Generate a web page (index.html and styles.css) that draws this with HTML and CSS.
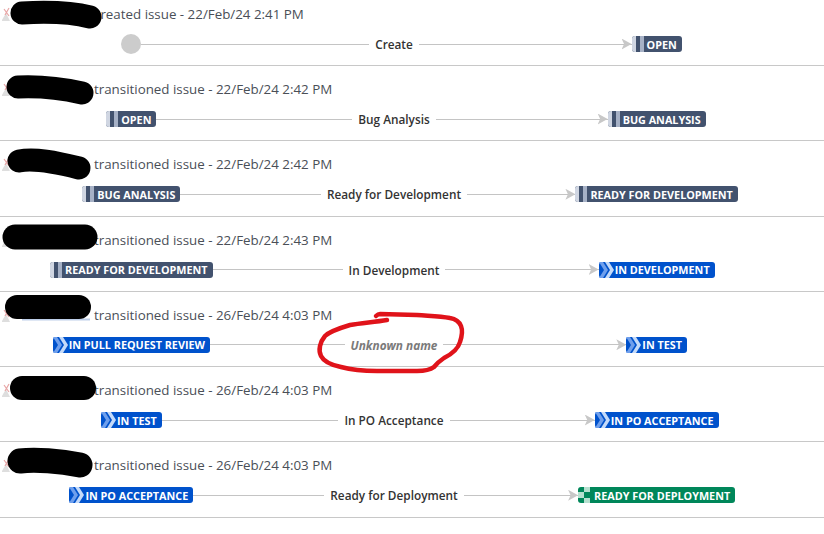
FILE: index.html
```html
<!DOCTYPE html>
<html lang="en">
<head>
<meta charset="utf-8">
<title>Issue history</title>
<link rel="stylesheet" href="styles.css">
</head>
<body>
<main class="history">
  <section class="entry">
    <p class="summary"><svg class="avatar" viewBox="0 0 10 16"><path d="M1 14L5 7l4 8H1z" fill="#dedede"/><path d="M3 3l5 7M8 2L4 9" stroke="#e8a5a5" stroke-width="1.2" fill="none"/></svg><span class="name"></span>created issue - 22/Feb/24 2:41 PM</p>
    <div class="flow">
      <div class="side from"><s></s><span class="start-dot"></span><i></i></div>
      <div class="mid"><i></i><b>Create</b><i></i></div>
      <div class="side to"><i></i><em></em><span class="status grey"><u class="bars"></u>OPEN</span><s></s></div>
    </div>
  </section>
  <section class="entry">
    <p class="summary"><svg class="avatar" viewBox="0 0 10 16"><path d="M1 14L5 7l4 8H1z" fill="#dedede"/><path d="M3 3l5 7M8 2L4 9" stroke="#e8a5a5" stroke-width="1.2" fill="none"/></svg><span class="name"></span>transitioned issue - 22/Feb/24 2:42 PM</p>
    <div class="flow">
      <div class="side from"><s></s><span class="status grey"><u class="bars"></u>OPEN</span><i></i></div>
      <div class="mid"><i></i><b>Bug Analysis</b><i></i></div>
      <div class="side to"><i></i><em></em><span class="status grey"><u class="bars"></u>BUG ANALYSIS</span><s></s></div>
    </div>
  </section>
  <section class="entry">
    <p class="summary"><svg class="avatar" viewBox="0 0 10 16"><path d="M1 14L5 7l4 8H1z" fill="#dedede"/><path d="M3 3l5 7M8 2L4 9" stroke="#e8a5a5" stroke-width="1.2" fill="none"/></svg><span class="name"></span>transitioned issue - 22/Feb/24 2:42 PM</p>
    <div class="flow">
      <div class="side from"><s></s><span class="status grey"><u class="bars"></u>BUG ANALYSIS</span><i></i></div>
      <div class="mid"><i></i><b>Ready for Development</b><i></i></div>
      <div class="side to"><i></i><em></em><span class="status grey"><u class="bars"></u>READY FOR DEVELOPMENT</span><s></s></div>
    </div>
  </section>
  <section class="entry">
    <p class="summary"><svg class="avatar" viewBox="0 0 10 16"><path d="M1 14L5 7l4 8H1z" fill="#dedede"/><path d="M3 3l5 7M8 2L4 9" stroke="#e8a5a5" stroke-width="1.2" fill="none"/></svg><span class="name"></span>transitioned issue - 22/Feb/24 2:43 PM</p>
    <div class="flow">
      <div class="side from"><s></s><span class="status grey"><u class="bars"></u>READY FOR DEVELOPMENT</span><i></i></div>
      <div class="mid"><i></i><b>In Development</b><i></i></div>
      <div class="side to"><i></i><em></em><span class="status blue"><svg class="chev" viewBox="0 0 15 16"><path d="M0 0h4l5 8-5 8H0l5-8z" fill="#6f9fec"/><path d="M6 0h4l5 8-5 8H6l5-8z" fill="#c4daf9"/></svg>IN DEVELOPMENT</span><s></s></div>
    </div>
  </section>
  <section class="entry">
    <p class="summary"><svg class="avatar" viewBox="0 0 10 16"><path d="M1 14L5 7l4 8H1z" fill="#dedede"/><path d="M3 3l5 7M8 2L4 9" stroke="#e8a5a5" stroke-width="1.2" fill="none"/></svg><span class="name"></span>transitioned issue - 26/Feb/24 4:03 PM</p>
    <div class="flow">
      <div class="side from"><s></s><span class="status blue"><svg class="chev" viewBox="0 0 15 16"><path d="M0 0h4l5 8-5 8H0l5-8z" fill="#6f9fec"/><path d="M6 0h4l5 8-5 8H6l5-8z" fill="#c4daf9"/></svg>IN PULL REQUEST REVIEW</span><i></i></div>
      <div class="mid"><i></i><b class="unknown">Unknown name</b><i></i></div>
      <div class="side to"><i></i><em></em><span class="status blue"><svg class="chev" viewBox="0 0 15 16"><path d="M0 0h4l5 8-5 8H0l5-8z" fill="#6f9fec"/><path d="M6 0h4l5 8-5 8H6l5-8z" fill="#c4daf9"/></svg>IN TEST</span><s></s></div>
    </div>
  </section>
  <section class="entry">
    <p class="summary"><svg class="avatar" viewBox="0 0 10 16"><path d="M1 14L5 7l4 8H1z" fill="#dedede"/><path d="M3 3l5 7M8 2L4 9" stroke="#e8a5a5" stroke-width="1.2" fill="none"/></svg><span class="name"></span>transitioned issue - 26/Feb/24 4:03 PM</p>
    <div class="flow">
      <div class="side from"><s></s><span class="status blue"><svg class="chev" viewBox="0 0 15 16"><path d="M0 0h4l5 8-5 8H0l5-8z" fill="#6f9fec"/><path d="M6 0h4l5 8-5 8H6l5-8z" fill="#c4daf9"/></svg>IN TEST</span><i></i></div>
      <div class="mid"><i></i><b>In PO Acceptance</b><i></i></div>
      <div class="side to"><i></i><em></em><span class="status blue"><svg class="chev" viewBox="0 0 15 16"><path d="M0 0h4l5 8-5 8H0l5-8z" fill="#6f9fec"/><path d="M6 0h4l5 8-5 8H6l5-8z" fill="#c4daf9"/></svg>IN PO ACCEPTANCE</span><s></s></div>
    </div>
  </section>
  <section class="entry">
    <p class="summary"><svg class="avatar" viewBox="0 0 10 16"><path d="M1 14L5 7l4 8H1z" fill="#dedede"/><path d="M3 3l5 7M8 2L4 9" stroke="#e8a5a5" stroke-width="1.2" fill="none"/></svg><span class="name"></span>transitioned issue - 26/Feb/24 4:03 PM</p>
    <div class="flow">
      <div class="side from"><s></s><span class="status blue"><svg class="chev" viewBox="0 0 15 16"><path d="M0 0h4l5 8-5 8H0l5-8z" fill="#6f9fec"/><path d="M6 0h4l5 8-5 8H6l5-8z" fill="#c4daf9"/></svg>IN PO ACCEPTANCE</span><i></i></div>
      <div class="mid"><i></i><b>Ready for Deployment</b><i></i></div>
      <div class="side to"><i></i><em></em><span class="status green"><svg class="check" viewBox="0 0 12 16"><path d="M6 0h6v5H6zM0 5h6v6H0zM6 11h6v5H6z" fill="#b5e0cf"/></svg>READY FOR DEPLOYMENT</span><s></s></div>
    </div>
  </section>
</main>
<svg class="markup" viewBox="0 0 824 534" aria-hidden="true">
  <path d="M22 319.5H90" stroke="#6f94cf" stroke-width="2" opacity=".45" fill="none"/>
  <g fill="none" stroke="#000" stroke-linecap="round" stroke-linejoin="round">
    <path d="M22 13C40 12 70 12 90 17" stroke-width="23"/>
    <path d="M18 87C40 86 60 88 82 93" stroke-width="23"/>
    <path d="M19 161C35 158 55 162 79 168" stroke-width="23"/>
    <path d="M15 237H85" stroke-width="25"/>
    <path d="M17 307H79" stroke-width="24"/>
    <path d="M22 388H84" stroke-width="24"/>
    <path d="M20 461C35 459 60 461 80 465" stroke-width="25"/>
  </g>
  <path d="M387 320C375 322 362 323 350 325C340 328 330 331 325 336C320 342 318 350 321 356C324 362 331 365 341 367C352 370 365 371 377 371L417 371C424 371 430 370 434 367C438 362 441 360 444 358C452 354 458 349 460 342C462 336 463 331 461 326C459 321 456 319 450 318C440 316 430 316 417 315L380 314C378 314 377 315 376 316" fill="none" stroke="#e0131a" stroke-width="4.5" stroke-linecap="round" stroke-linejoin="round"/>
</svg>
</body>
</html>
```
FILE: styles.css
```css
* { box-sizing: border-box; }
html, body { margin: 0; padding: 0; background: #fff; }
body {
  position: relative;
  width: 824px;
  height: 534px;
  overflow: hidden;
  font-family: "Open Sans", "Liberation Sans", sans-serif;
  color: #333;
}
.history { display: flex; flex-direction: column; }
.entry {
  height: 75.25px;
  border-bottom: 1px solid #c8c8c8;
  padding-top: 13px;
}
.entry:first-child { height: 66px; padding-top: 4px; }
.summary {
  display: flex;
  align-items: center;
  height: 20px;
  margin: 0;
  font-size: 13.35px;
  line-height: 20px;
  color: #4a4f57;
}
.avatar {
  flex: none;
  width: 10px;
  height: 16px;
  margin: 0 0 0 1px;
}
.name { flex: none; width: 83px; }
.flow {
  display: grid;
  grid-template-columns: repeat(3, 262.67px);
  height: 20px;
  margin-top: 10px;
  align-items: center;
}
.side, .mid { display: flex; align-items: center; min-width: 0; }
.side i, .mid i, .side s { flex: 1 1 0; }
.side i, .mid i { height: 1px; background: #c4c4c4; }
.side s { display: block; }
.side em {
  flex: none;
  width: 10px;
  height: 11px;
  margin-left: -10px;
  background: #c8c8c8;
  clip-path: polygon(0 0, 100% 50%, 0 100%, 25% 50%);
}
.mid b {
  flex: none;
  padding: 0 6px;
  font-size: 11.8px;
  font-weight: 600;
  color: #333;
}
.mid b.unknown { font-style: italic; font-weight: 700; color: #7a7a7a; }
.start-dot {
  flex: none;
  width: 20px;
  height: 20px;
  border-radius: 50%;
  background: #ccc;
}
.status {
  flex: none;
  display: flex;
  align-items: center;
  height: 16px;
  padding-right: 5px;
  border-radius: 3px;
  font-size: 10.8px;
  font-weight: 700;
  color: #fff;
  white-space: nowrap;
}
.grey { background: #42526e; }
.blue { background: #0052cc; }
.green { background: #00875a; }
.bars {
  display: block;
  flex: none;
  width: 12px;
  height: 16px;
  margin-right: 3px;
  border-radius: 3px 0 0 3px;
  background: linear-gradient(90deg, #d0d6e2 0 4px, #42526e 4px 8px, #a6b1c6 8px 12px);
}
.chev { flex: none; width: 15px; height: 16px; margin-right: 1px; }
.check { flex: none; width: 12px; height: 16px; margin-right: 4px; }
.markup {
  position: absolute;
  left: 0;
  top: 0;
  width: 824px;
  height: 534px;
  pointer-events: none;
}
```
